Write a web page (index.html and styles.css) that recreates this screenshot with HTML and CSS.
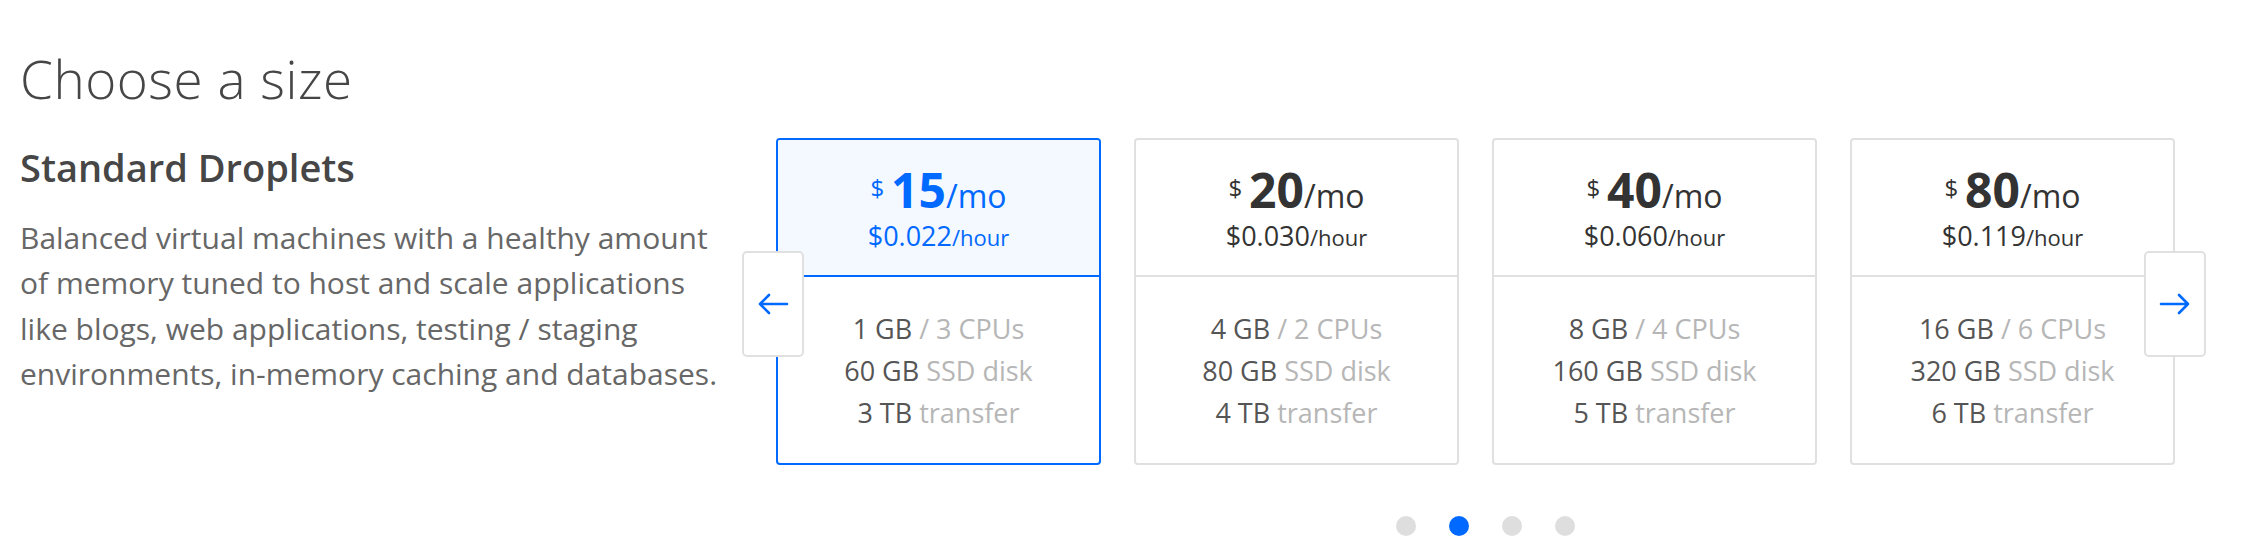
FILE: index.html
```html
<!DOCTYPE html>
<html lang="en">
<head>
<meta charset="utf-8">
<title>Choose a size</title>
<link rel="stylesheet" href="styles.css">
</head>
<body>
<main class="sizes">
  <h1 class="title">Choose a size</h1>
  <div class="row">
    <div class="intro">
      <h2 class="intro-title">Standard Droplets</h2>
      <p class="intro-text">Balanced virtual machines with a healthy amount of memory tuned to host and scale applications like blogs, web applications, testing / staging environments, in-memory caching and databases.</p>
    </div>
    <div class="carousel">
      <div class="track">
        <div class="card card--selected">
          <div class="card-price">
            <div class="price-mo"><span class="cur">$</span><span class="amt">15</span><span class="per">/mo</span></div>
            <div class="price-hr">$0.022<span class="per-hr">/hour</span></div>
          </div>
          <div class="card-specs">
            <div class="spec"><span class="val">1 GB</span> / 3 CPUs</div>
            <div class="spec"><span class="val">60 GB</span> SSD disk</div>
            <div class="spec"><span class="val">3 TB</span> transfer</div>
          </div>
        </div>
        <div class="card">
          <div class="card-price">
            <div class="price-mo"><span class="cur">$</span><span class="amt">20</span><span class="per">/mo</span></div>
            <div class="price-hr">$0.030<span class="per-hr">/hour</span></div>
          </div>
          <div class="card-specs">
            <div class="spec"><span class="val">4 GB</span> / 2 CPUs</div>
            <div class="spec"><span class="val">80 GB</span> SSD disk</div>
            <div class="spec"><span class="val">4 TB</span> transfer</div>
          </div>
        </div>
        <div class="card">
          <div class="card-price">
            <div class="price-mo"><span class="cur">$</span><span class="amt">40</span><span class="per">/mo</span></div>
            <div class="price-hr">$0.060<span class="per-hr">/hour</span></div>
          </div>
          <div class="card-specs">
            <div class="spec"><span class="val">8 GB</span> / 4 CPUs</div>
            <div class="spec"><span class="val">160 GB</span> SSD disk</div>
            <div class="spec"><span class="val">5 TB</span> transfer</div>
          </div>
        </div>
        <div class="card">
          <div class="card-price">
            <div class="price-mo"><span class="cur">$</span><span class="amt">80</span><span class="per">/mo</span></div>
            <div class="price-hr">$0.119<span class="per-hr">/hour</span></div>
          </div>
          <div class="card-specs">
            <div class="spec"><span class="val">16 GB</span> / 6 CPUs</div>
            <div class="spec"><span class="val">320 GB</span> SSD disk</div>
            <div class="spec"><span class="val">6 TB</span> transfer</div>
          </div>
        </div>
      </div>
      <button class="nav nav--prev" aria-label="Previous">
        <svg width="32" height="22" viewBox="0 0 32 22"><path d="M30 11H3M12 2L3 11l9 9" fill="none" stroke="#0069ff" stroke-width="2.6" stroke-linecap="round" stroke-linejoin="round"/></svg>
      </button>
      <button class="nav nav--next" aria-label="Next">
        <svg width="32" height="22" viewBox="0 0 32 22"><path d="M2 11h27M20 2l9 9-9 9" fill="none" stroke="#0069ff" stroke-width="2.6" stroke-linecap="round" stroke-linejoin="round"/></svg>
      </button>
      <div class="dots">
        <span class="dot"></span>
        <span class="dot dot--active"></span>
        <span class="dot"></span>
        <span class="dot"></span>
      </div>
    </div>
  </div>
</main>
</body>
</html>
```

FILE: styles.css
```css
* { box-sizing: border-box; }

body {
  margin: 0;
  font-family: "Open Sans", "Lato", sans-serif;
  color: #444;
  background: #fff;
}

.sizes {
  padding-left: 20px;
}

.title {
  margin: 0;
  padding-top: 51px;
  font-size: 53px;
  font-weight: 300;
  letter-spacing: 0.5px;
  line-height: 56px;
  color: #464646;
}

.row {
  display: flex;
  margin-top: 31px;
}

.intro {
  width: 722px;
  flex: none;
}

.intro-title {
  margin: 0;
  padding-top: 9px;
  font-size: 38px;
  font-weight: 600;
  line-height: 40px;
  color: #464646;
}

.intro-text {
  margin: 28px 0 0;
  font-size: 30px;
  line-height: 45.4px;
  color: #676767;
  max-width: 716px;
}

.carousel {
  position: relative;
  padding-left: 34px;
}

.track {
  display: grid;
  grid-template-columns: repeat(4, 325px);
  column-gap: 33px;
}

.card {
  height: 327px;
  border: 2px solid #e0e0e0;
  border-radius: 4px;
  display: flex;
  flex-direction: column;
  overflow: hidden;
  text-align: center;
}

.card-price {
  height: 137px;
  border-bottom: 2px solid #e0e0e0;
  padding-top: 23px;
  color: #333;
}

.price-mo {
  font-size: 32px;
  line-height: 50px;
}

.cur {
  font-size: 24px;
  vertical-align: 11px;
  margin-right: 7px;
}

.amt {
  font-size: 48px;
  font-weight: 700;
}

.price-hr {
  font-size: 27px;
  line-height: 30px;
}

.per-hr {
  font-size: 22px;
}

.card-specs {
  flex: 1;
  padding-top: 31px;
  color: #b6b6b6;
  font-size: 27px;
  line-height: 42px;
}

.val {
  color: #555;
}

.card--selected {
  border-color: #0069ff;
}

.card--selected .card-price {
  background: #f4f8ff;
  border-bottom-color: #0069ff;
  color: #0069ff;
}

.nav {
  position: absolute;
  top: 113px;
  width: 62px;
  height: 106px;
  padding: 0;
  border: 2px solid #e0e0e0;
  border-radius: 5px;
  background: #fff;
  display: flex;
  align-items: center;
  justify-content: center;
  cursor: pointer;
}

.nav--prev { left: 0; }
.nav--next { right: -31px; }

.dots {
  display: flex;
  justify-content: center;
  gap: 33px;
  margin-top: 51px;
  padding-left: 20px;
}

.dot {
  width: 20px;
  height: 20px;
  border-radius: 50%;
  background: #dedede;
}

.dot--active {
  background: #0069ff;
}
```
